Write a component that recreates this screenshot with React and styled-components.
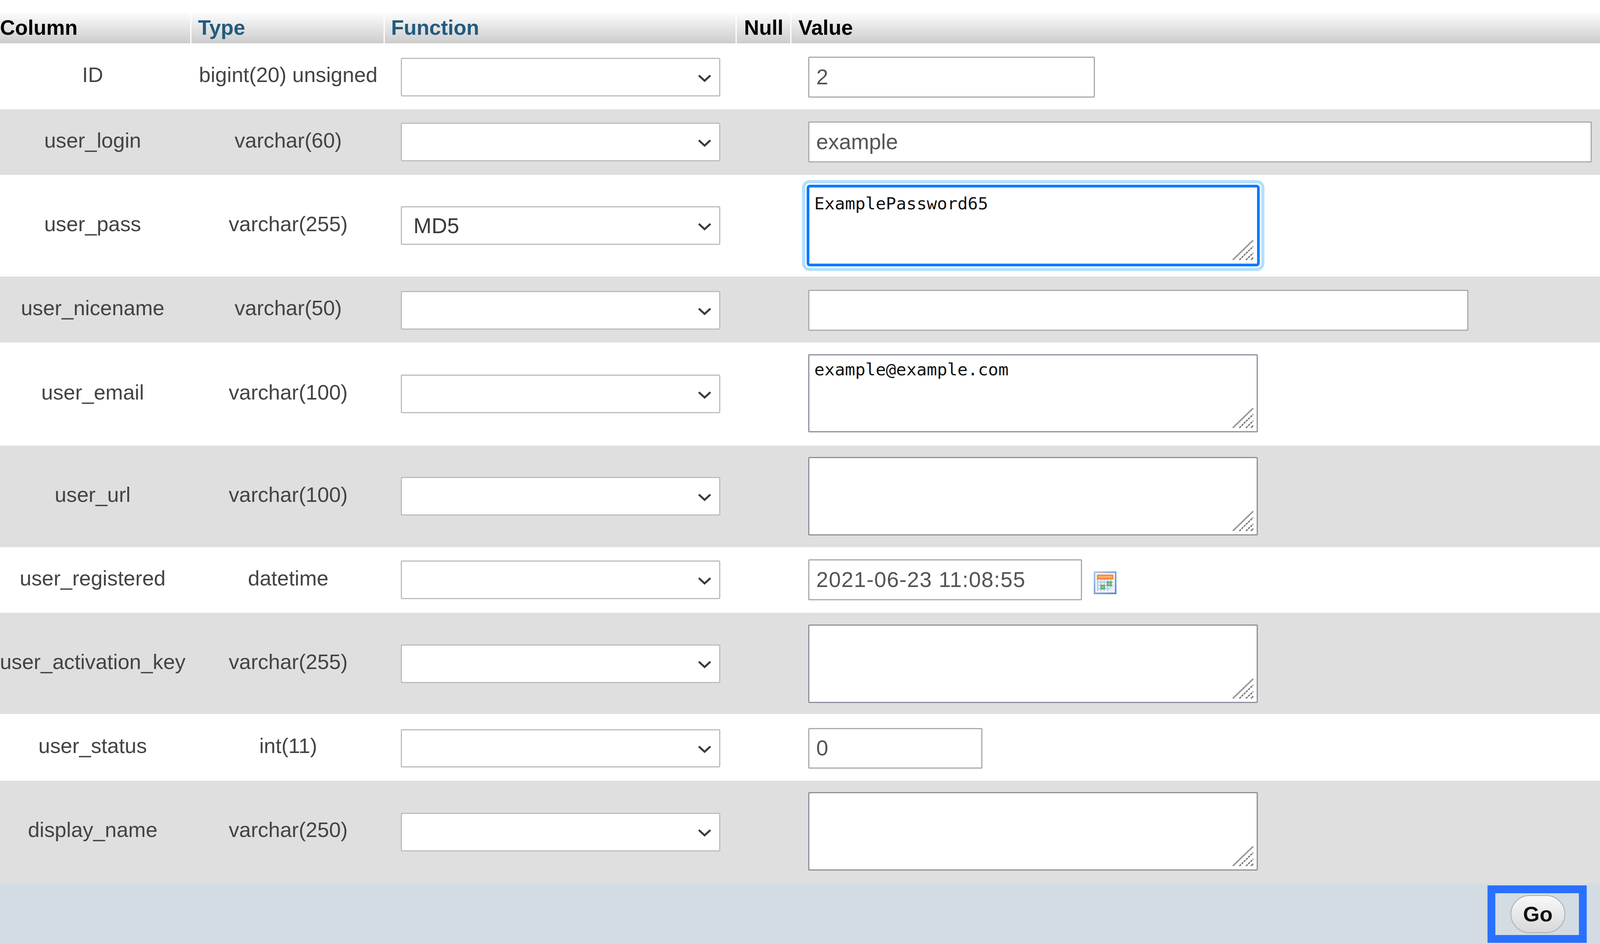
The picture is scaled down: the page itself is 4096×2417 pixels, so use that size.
import React from 'react';
import styled, { createGlobalStyle, css } from 'styled-components';

// all sizes are taken from the 4144px reference and scaled to the 4096px window
const s = (n) => `${(n * 4096) / 4144}px`;

const GlobalStyle = createGlobalStyle`
  html, body {
    margin: 0;
    padding: 0;
    background: #fff;
  }
  body {
    font-family: "Liberation Sans", Arial, sans-serif;
    color: #444;
  }
`;

const columns = css`
  display: grid;
  grid-template-columns: ${s(496)} ${s(501)} ${s(911)} ${s(142)} 1fr;
`;

const Page = styled.div`
  width: 100%;
  height: ${s(2445)};
  padding-top: ${s(28)};
  box-sizing: border-box;
  overflow: hidden;
`;

const HeaderRow = styled.div`
  ${columns}
  height: ${s(84)};
`;

const HeaderCell = styled.div`
  display: flex;
  align-items: center;
  box-sizing: border-box;
  padding-left: ${(p) => s(p.$pad || 0)};
  padding-top: ${s(2)};
  border-right: ${(p) => (p.$last ? 'none' : `${s(3.5)} solid #fff`)};
  background: linear-gradient(#fff, #ccc);
  font-size: ${s(54)};
  font-weight: bold;
  color: ${(p) => (p.$link ? '#235a81' : '#000')};
  white-space: nowrap;
`;

const Row = styled.div`
  ${columns}
  height: ${(p) => s(p.$height)};
  background: ${(p) => (p.$even ? '#dfdfdf' : '#fff')};
`;

const TextCell = styled.div`
  display: flex;
  align-items: center;
  justify-content: center;
  padding-right: ${(p) => s(p.$right || 0)};
  padding-bottom: ${(p) => s(9 + (p.$lift || 0))};
  box-sizing: border-box;
  font-size: ${s(54.4)};
  white-space: nowrap;
`;

const ControlCell = styled.div`
  display: flex;
  align-items: center;
  padding-left: ${(p) => s(p.$left)};
  padding-top: ${(p) => s(p.$shift || 0)};
  box-sizing: border-box;
`;

const SelectWrap = styled.div`
  position: relative;
  width: ${s(828)};
  height: ${s(100)};
`;

const Select = styled.select`
  appearance: none;
  width: 100%;
  height: 100%;
  box-sizing: border-box;
  margin: 0;
  padding: 0 0 0 ${s(30)};
  background: #fff;
  border: ${s(4)} solid #bdbdbd;
  border-radius: ${s(4)};
  font-family: "Liberation Sans", Arial, sans-serif;
  font-size: ${s(56)};
  color: #3a3a3a;
  outline: none;
`;

const Chevron = styled.svg`
  position: absolute;
  right: ${s(24)};
  top: calc(50% + ${s(2)});
  width: ${s(34)};
  height: ${s(22)};
  transform: translateY(-50%);
`;

const TextInput = styled.input`
  width: ${(p) => s(p.$width)};
  height: ${s(106)};
  box-sizing: border-box;
  margin: 0;
  padding: 0 0 ${s(2)} ${s(18)};
  background: #fff;
  border: ${s(3.5)} solid #aaa;
  border-radius: ${s(3)};
  font-family: "Liberation Sans", Arial, sans-serif;
  font-size: ${s(56)};
  letter-spacing: ${(p) => s(p.$spacing || 0)};
  color: #555;
  outline: none;
`;

const AreaWrap = styled.div`
  position: relative;
  display: flex;
  margin-left: ${(p) => (p.$focused ? s(-4) : 0)};
  margin-bottom: ${(p) => s(p.$lift || 0)};
`;

const Area = styled.textarea`
  display: block;
  width: ${(p) => s(p.$focused ? 1174 : 1165)};
  height: ${(p) => s(p.$focused ? 212 : 203)};
  box-sizing: border-box;
  margin: 0;
  padding: ${(p) => s(p.$focused ? 16 : 11)} ${s(13)} 0 ${s(13)};
  background: #fff;
  border: ${(p) => (p.$focused ? `${s(8)} solid #0a7aff` : `${s(3.5)} solid #8f8f9d`)};
  border-radius: ${(p) => s(p.$focused ? 8 : 3)};
  box-shadow: ${(p) => (p.$focused ? `0 0 0 ${s(4)} #fff, 0 0 0 ${s(12)} #b3e0ff` : 'none')};
  font-family: "DejaVu Sans Mono", "Liberation Mono", monospace;
  font-size: ${s(44)};
  line-height: 1.16;
  color: #111;
  resize: none;
  outline: none;
`;

const Grip = styled.svg`
  position: absolute;
  right: ${(p) => s(p.$focused ? 16 : 11)};
  bottom: ${(p) => s(p.$focused ? 16 : 11)};
  width: ${s(55)};
  height: ${s(53)};
  pointer-events: none;
`;

const CalendarIcon = styled.svg`
  width: ${s(59)};
  height: ${s(59)};
  margin-left: ${s(30)};
  margin-top: ${s(16)};
  flex: none;
`;

const Footer = styled.div`
  display: flex;
  justify-content: flex-end;
  align-items: flex-start;
  height: ${s(156)};
  padding: ${s(5)} ${s(34)} 0 0;
  box-sizing: border-box;
  background: #d3dce3;
`;

const Highlight = styled.div`
  display: flex;
  align-items: center;
  justify-content: center;
  width: ${s(257)};
  height: ${s(148)};
  box-sizing: border-box;
  border: ${s(21)} solid #2970ff;
`;

const GoButton = styled.button`
  width: ${s(141)};
  height: ${s(99)};
  box-sizing: border-box;
  margin: 0 0 0 ${s(3)};
  padding: 0;
  background: linear-gradient(#f8f8f8, #d8d8d8);
  border: ${s(3)} solid #aaa;
  border-radius: ${s(50)};
  font-family: "Liberation Sans", Arial, sans-serif;
  font-size: ${s(55)};
  font-weight: bold;
  color: #111;
`;

const rows = [
  { name: 'ID', type: 'bigint(20) unsigned', height: 171, shift: 5, kind: 'input', value: '2', width: 743 },
  { name: 'user_login', type: 'varchar(60)', height: 170, kind: 'input', value: 'example', width: 2030 },
  { name: 'user_pass', type: 'varchar(255)', height: 263, fn: 'MD5', kind: 'area', value: 'ExamplePassword65', focused: true },
  { name: 'user_nicename', type: 'varchar(50)', height: 171, shift: 5, kind: 'input', value: '', width: 1710 },
  { name: 'user_email', type: 'varchar(100)', height: 267, kind: 'area', value: 'example@example.com', lift: 3 },
  { name: 'user_url', type: 'varchar(100)', height: 263, kind: 'area', value: '' },
  { name: 'user_registered', type: 'datetime', height: 170, kind: 'date', value: '2021-06-23 11:08:55', width: 710, spacing: 1.4 },
  { name: 'user_activation_key', type: 'varchar(255)', height: 262, shift: 3, kind: 'area', value: '' },
  { name: 'user_status', type: 'int(11)', height: 173, shift: 6, kind: 'input', value: '0', width: 452 },
  { name: 'display_name', type: 'varchar(250)', height: 267, kind: 'area', value: '', lift: 4, textLift: 4 },
];

const GripLines = ({ focused }) => (
  <Grip $focused={focused} viewBox="0 0 55 53">
    <path d="M1 52 L54 1" stroke="#999" strokeWidth="4" />
    <path d="M18 52 L54 17" stroke="#777" strokeWidth="3.5" strokeDasharray="6 2" />
    <path d="M35 52 L54 34" stroke="#777" strokeWidth="3.5" strokeDasharray="6 2" />
    <path d="M48 52 L54 46" stroke="#777" strokeWidth="3.5" />
  </Grip>
);

const calendarCells = [];
for (let y = 0; y < 4; y++) {
  for (let x = 0; x < 5; x++) {
    calendarCells.push(
      <rect key={`${x}-${y}`} x={12 + x * 8.3} y={21 + y * 8.3} width="4.5" height="4.5" fill="#fff" />
    );
  }
}

const Calendar = () => (
  <CalendarIcon viewBox="0 0 58 58">
    <defs>
      <linearGradient id="calEdge" x1="0" y1="0" x2="1" y2="1">
        <stop offset="0" stopColor="#a9c6ea" />
        <stop offset="1" stopColor="#4f83c4" />
      </linearGradient>
    </defs>
    <rect x="0" y="0" width="58" height="58" fill="url(#calEdge)" />
    <rect x="4" y="4" width="50" height="50" fill="#eef3fa" />
    <rect x="8" y="8" width="42" height="13" fill="#ff8a3c" />
    <rect x="12" y="12" width="34" height="4" fill="#ffb27a" />
    <rect x="8" y="21" width="42" height="29" fill="#b9d0ee" />
    {calendarCells}
    <rect x="17" y="34" width="12" height="12" fill="#6aae6a" />
    <rect x="21" y="38" width="4" height="4" fill="#9ed09e" />
    <rect x="33" y="25" width="13" height="13" fill="#6aae6a" />
    <rect x="37" y="29" width="5" height="5" fill="#9ed09e" />
    <path d="M36 50 L50 36 L50 50 Z" fill="#e6edf7" />
  </CalendarIcon>
);

const ValueControl = ({ row }) => {
  if (row.kind === 'area') {
    return (
      <AreaWrap $focused={row.focused} $lift={row.lift}>
        <Area $focused={row.focused} defaultValue={row.value} readOnly spellCheck={false} />
        <GripLines focused={row.focused} />
      </AreaWrap>
    );
  }
  return (
    <>
      <TextInput $width={row.width} $spacing={row.spacing} defaultValue={row.value} readOnly />
      {row.kind === 'date' && <Calendar />}
    </>
  );
};

const App = () => (
  <Page>
    <GlobalStyle />
    <HeaderRow>
      <HeaderCell>Column</HeaderCell>
      <HeaderCell $pad={17} $link>Type</HeaderCell>
      <HeaderCell $pad={16} $link>Function</HeaderCell>
      <HeaderCell $pad={19}>Null</HeaderCell>
      <HeaderCell $pad={18} $last>Value</HeaderCell>
    </HeaderRow>
    {rows.map((row, i) => (
      <Row key={row.name} $height={row.height} $even={i % 2 === 1}>
        <TextCell $right={16} $lift={row.textLift}>{row.name}</TextCell>
        <TextCell $lift={row.textLift}>{row.type}</TextCell>
        <ControlCell $left={41} $shift={row.shift}>
          <SelectWrap>
            <Select defaultValue={row.fn || ''}>
              <option value=""></option>
              <option value="MD5">MD5</option>
            </Select>
            <Chevron viewBox="0 0 34 22">
              <path d="M2 4 L17 18 L32 4" fill="none" stroke="#3a3a3a" strokeWidth="5" />
            </Chevron>
          </SelectWrap>
        </ControlCell>
        <div />
        <ControlCell $left={43} $shift={row.shift}>
          <ValueControl row={row} />
        </ControlCell>
      </Row>
    ))}
    <Footer>
      <Highlight>
        <GoButton>Go</GoButton>
      </Highlight>
    </Footer>
  </Page>
);

export default App;
